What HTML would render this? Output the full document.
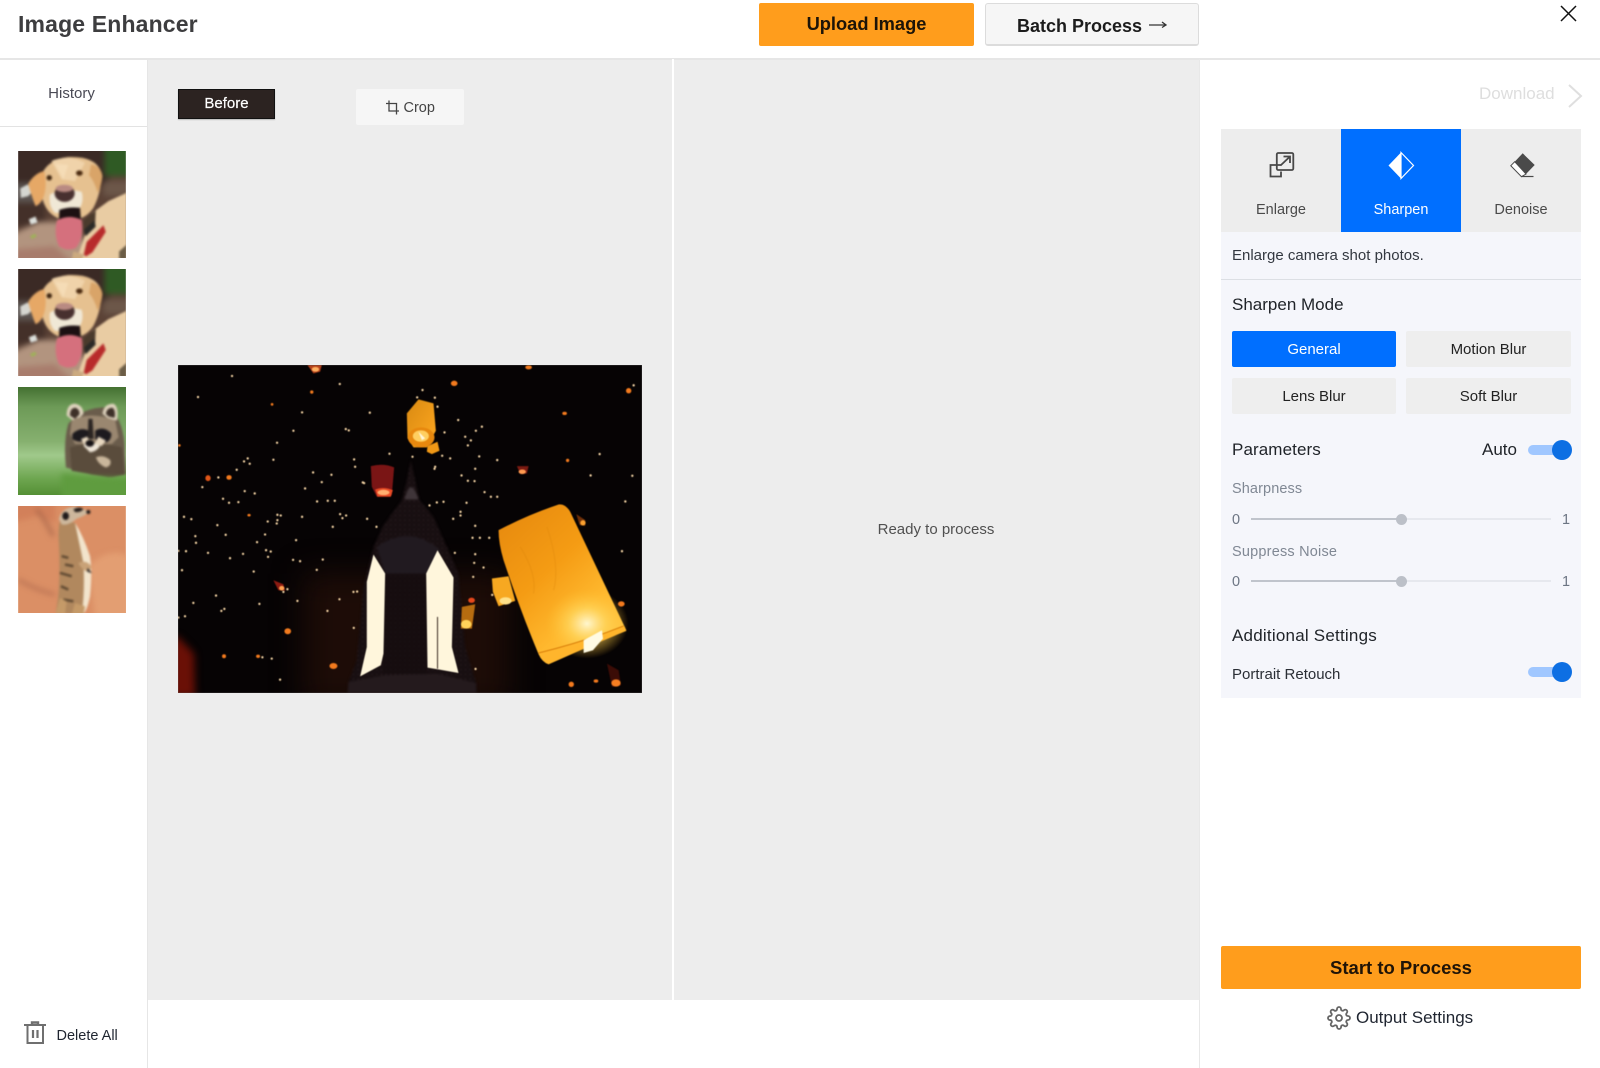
<!DOCTYPE html>
<html lang="en"><head><meta charset="utf-8"><title>Image Enhancer</title>
<style>
html,body{margin:0;padding:0;background:#fff}
body{width:1600px;height:1068px;position:relative;overflow:hidden;font-family:"Liberation Sans",Arial,sans-serif;color:#222}
.b{position:absolute}
.t{position:absolute;white-space:nowrap;line-height:20px;height:20px}
.c{text-align:center}
.btn{position:absolute;text-align:center;border-radius:2px;background:#eee;font-size:15px;color:#222;line-height:37px;height:36px}
svg{position:absolute;display:block}
.bg{filter:blur(9px)}
.s1{filter:blur(3.5px)}
</style></head><body>

<!-- structure -->
<div class="b" style="left:148px;top:59px;width:1051px;height:941px;background:#ededed"></div>
<div class="b" style="left:0;top:58px;width:1600px;height:1.5px;background:#e6e6e6"></div>
<div class="b" style="left:147px;top:59px;width:1px;height:1009px;background:#e6e6e6"></div>
<div class="b" style="left:1199px;top:59px;width:1px;height:1009px;background:#e8e8e8"></div>
<div class="b" style="left:671.5px;top:59px;width:2px;height:941px;background:#fff"></div>
<div class="b" style="left:0;top:125.5px;width:147px;height:1.5px;background:#e3e3e3"></div>

<!-- header -->
<div class="t" style="left:18px;top:14px;font-size:23px;font-weight:700;color:#3d3d3f;line-height:20px;letter-spacing:.15px">Image Enhancer</div>
<div class="b c" style="left:759px;top:3px;width:215px;height:43px;background:#ff9d1c;border-radius:2px;font-size:18.3px;font-weight:700;line-height:42px;color:#1d1408">Upload Image</div>
<div class="b" style="left:985px;top:3px;width:212px;height:40px;background:#f6f6f6;border:1.5px solid #dcdcdc;border-bottom-width:2px;border-radius:3px"></div>
<div class="t" style="left:1017px;top:16px;font-size:18px;font-weight:700;color:#1c1c1c">Batch Process</div>

<!-- left -->
<div class="t c" style="left:0;top:84px;width:143px;font-size:15px;color:#4a4a55">History</div>

<!-- dog thumbs -->
<svg width="0" height="0" style="left:0;top:0"><defs>
<clipPath id="tc"><rect width="322" height="320"/></clipPath>
<symbol id="dog" viewBox="0 0 322 320">
<g clip-path="url(#tc)">
<g class="bg">
<rect x="-20" y="-20" width="365" height="365" fill="#5b4236"/>
<rect x="-20" y="-20" width="290" height="120" fill="#3b2a25"/>
<rect x="258" y="-20" width="85" height="95" fill="#2f5a24"/>
<rect x="-20" y="95" width="90" height="60" fill="#5c5552"/>
<rect x="-20" y="155" width="100" height="70" fill="#443029"/>
<path d="M-20 250L60 212 165 212 240 340H-20z" fill="#b2947f"/>
<path d="M-20 295L110 285 170 340H-20z" fill="#a87c6c"/>
<rect x="255" y="90" width="80" height="45" fill="#6c5749"/>
</g>
<g class="s1">
<path d="M6 112L28 100 46 118 30 135 8 140z" fill="#d5d6d1"/>
<path d="M32 204L52 196 58 214 38 220z" fill="#dde0dc"/>
<path d="M35 255l15-8 6 8-14 8z" fill="#9fb05a"/>
<path d="M170 340L222 185 270 150 340 118V340z" fill="#e9cca3"/>
<path d="M302 300L325 280V325H302z" fill="#6a5c46"/>
<path d="M70 70Q90 25 150 18 225 15 245 55 255 110 225 170 195 215 130 205 80 190 70 130z" fill="#e6c190"/>
<path d="M100 30Q150 10 200 35L170 90 130 85z" fill="#f0d3aa"/>
<path d="M110 38L135 85 150 42z" fill="#f5dcb6"/>
<path d="M30 98Q50 65 78 60 88 105 75 140 65 160 52 165 38 130 30 98z" fill="#e6a866"/>
<path d="M218 40Q248 45 252 75 250 100 238 125 228 90 212 72z" fill="#d9a468"/>
<path d="M95 130Q135 108 190 122 200 160 172 185H110Q90 165 95 130z" fill="#f0e8d6"/>
<ellipse cx="139" cy="127" rx="30" ry="25" fill="#48302f"/>
<ellipse cx="138" cy="112" rx="26" ry="11" fill="#b98a82"/>
<ellipse cx="93" cy="80" rx="8" ry="8" fill="#3d2410"/>
<ellipse cx="183" cy="66" rx="10" ry="8" fill="#4a2a10"/>
<path d="M123 176Q150 166 185 170L188 210 122 210z" fill="#1c1012"/>
<path d="M196 208L232 178 230 220 198 238z" fill="#4a3a2c"/>
<path d="M197 235L228 208 232 226 202 255z" fill="#2b2a27"/>
<path d="M116 208Q150 188 190 206 198 260 172 290 145 302 122 285 106 250 116 208z" fill="#d5707d"/>
<path d="M196 310L205 272 255 222 262 242 222 303 203 315z" fill="#b82b2b"/>
<path d="M165 300L198 310 190 325 160 325z" fill="#cbaa80"/>
</g></g></symbol>
</defs></svg>

<svg style="left:18px;top:151px" width="108" height="107" viewBox="0 0 322 320"><use href="#dog"/></svg>
<svg style="left:18px;top:269px" width="108" height="107" viewBox="0 0 322 320"><use href="#dog"/></svg>

<!-- raccoon -->
<svg style="left:18px;top:387px" width="108" height="108" viewBox="0 0 322 322">
<defs><linearGradient id="gr" x1="0" y1="0" x2="0" y2="1"><stop offset="0" stop-color="#3d6a2b"/><stop offset=".2" stop-color="#6d9a57"/><stop offset=".5" stop-color="#86b06f"/><stop offset=".62" stop-color="#a0c98b"/><stop offset=".82" stop-color="#6ea650"/><stop offset="1" stop-color="#4e8a2e"/></linearGradient>
<clipPath id="rc"><rect width="322" height="322"/></clipPath></defs>
<g clip-path="url(#rc)">
<rect x="-10" y="-10" width="345" height="345" fill="url(#gr)"/>
<g class="s1">
<path d="M143 240Q135 160 150 110 190 60 270 60 310 90 318 170L322 260 280 270 220 262z" fill="#6a5c4b"/>
<path d="M155 180Q230 160 310 180L318 262 270 270 160 250z" fill="#5a4c3c"/>
<path d="M145 85Q145 50 170 50 195 55 195 80L170 105z" fill="#ded2bd"/>
<path d="M155 85Q155 62 172 62 185 68 183 82L170 95z" fill="#3d3028"/>
<path d="M252 80Q255 50 285 50 302 60 295 100L270 95z" fill="#ded2bd"/>
<path d="M262 80Q265 62 282 62 292 70 288 92L270 88z" fill="#3d3028"/>
<path d="M160 100Q215 70 290 100L300 150 280 170 170 170 155 140z" fill="#9a8770"/>
<path d="M162 140Q185 118 210 130 215 145 205 160 180 168 162 155z" fill="#1d1a1e"/>
<path d="M230 130Q255 115 278 138 280 155 265 165 240 165 230 155z" fill="#1d1a1e"/>
<path d="M210 95L222 95 226 155 208 155z" fill="#2a2422"/>
<path d="M188 155L206 148 218 170 200 178z" fill="#e8d8c0"/>
<path d="M228 170L240 148 262 160 250 176z" fill="#e8d8c0"/>
<path d="M195 175Q215 160 245 175 235 192 215 195z" fill="#efe6d8"/>
<ellipse cx="214" cy="168" rx="13" ry="10" fill="#161214"/>
<path d="M232 210Q255 200 275 218 280 235 262 240 240 232 232 210z" fill="#c9b69b"/>
</g>
<path class="bg" d="M130 258Q220 272 335 272V335H130z" fill="#5f9c3f"/>
</g></svg>

<!-- meerkat -->
<svg style="left:18px;top:506px" width="108" height="107" viewBox="0 0 322 320">
<defs><clipPath id="mc"><rect width="322" height="320"/></clipPath></defs>
<g clip-path="url(#mc)">
<rect x="-10" y="-10" width="345" height="345" fill="#db8f65"/>
<g class="bg">
<path d="M210 180Q270 120 335 150V335H230z" fill="#e39e72"/>
<path d="M-20 -20H110V50L60 30-20 50z" fill="#d2805a"/>
<path d="M55 10Q80 40 105 90" stroke="#9c5c44" stroke-width="7" fill="none"/>
<path d="M0 220Q50 250 110 265" stroke="#b06a4e" stroke-width="7" fill="none"/>
</g>
<g class="s1">
<path d="M112 320Q120 280 122 240 125 180 122 120 118 70 125 45L170 50 190 90 215 150 218 200 210 280 195 325z" fill="#b1885e"/>
<path d="M170 50Q195 90 215 150 222 200 215 270 205 320 190 325 200 250 195 170z" fill="#f2e4cc"/>
<path d="M130 150L150 155M125 200L160 210M128 240L150 250M135 280L165 285M140 175L165 180" stroke="#5a452f" stroke-width="7" fill="none"/>
<path d="M122 40Q128 6 170 2 195 6 212 18 200 30 175 38 150 60 130 55z" fill="#cdb79c"/>
<path d="M165 10Q185 0 195 10 185 20 170 18z" fill="#26201d"/>
<ellipse cx="142" cy="30" rx="10" ry="12" fill="#1f1a1a"/>
<ellipse cx="210" cy="18" rx="6" ry="6" fill="#1c1818"/>
<path d="M180 170Q205 160 218 180 218 195 205 195 190 190 180 170z" fill="#c9a277"/>
<path d="M208 185L220 200 215 200 205 195z" fill="#35302c"/>
<path d="M112 320L125 275 145 285 140 325zM160 325L170 290 200 300 195 325z" fill="#c59a68"/>
</g></g></svg>

<!-- delete all -->
<svg style="left:0;top:1000px" width="60" height="68" viewBox="0 1000 60 68" fill="none" stroke="#6f6f6f" stroke-width="2">
<path d="M24 1025H46"/><path d="M32 1024V1022.5H38V1024" stroke-width="2.4"/>
<path d="M27.5 1025V1043H43V1025"/><path d="M33 1030V1038M37.5 1030V1038" stroke-width="2.2"/>
</svg>
<div class="t" style="left:56.5px;top:1026px;font-size:14.5px;color:#1f2530">Delete All</div>

<!-- before / crop -->
<div class="b c" style="left:178px;top:89px;width:95px;height:28px;background:#2c2321;border:.5px solid #111;box-shadow:0 1px 1px #bbb;color:#fff;font-size:15px;line-height:28px;-webkit-text-stroke:.2px #fff">Before</div>
<div class="b" style="left:356px;top:89px;width:108px;height:36px;background:#f6f6f6;border-radius:2px"></div>
<svg style="left:384px;top:99px" width="16" height="17" viewBox="384 99 16 17" fill="none" stroke="#444" stroke-width="1.3"><path d="M389 100.5V111H399M386 103.5H396.5V114.5"/></svg>
<div class="t" style="left:403.5px;top:98px;font-size:14.5px;color:#444">Crop</div>

<!-- main image -->
<svg style="left:178px;top:365px" width="464" height="328" viewBox="24 15 1391 983" preserveAspectRatio="none">
<defs>
<linearGradient id="bl" x1="0" y1="0" x2=".75" y2="1"><stop offset="0" stop-color="#e5880e"/><stop offset=".45" stop-color="#f59c14"/><stop offset=".75" stop-color="#ffb82e"/><stop offset="1" stop-color="#ffc745"/></linearGradient>
<radialGradient id="gl"><stop offset="0" stop-color="#fff7d0"/><stop offset=".45" stop-color="#ffd860" stop-opacity=".7"/><stop offset="1" stop-color="#ffc030" stop-opacity="0"/></radialGradient>
<linearGradient id="tl" x1="0" y1="0" x2="1" y2="1"><stop offset="0" stop-color="#d98a12"/><stop offset="1" stop-color="#ffa820"/></linearGradient>
<pattern id="tx" width="14" height="14" patternUnits="userSpaceOnUse"><rect width="14" height="14" fill="#150c0e"/><circle cx="4" cy="4" r="2.4" fill="#372b30"/><circle cx="11" cy="11" r="2" fill="#2a1f23"/></pattern>
<clipPath id="ic"><rect x="24" y="15" width="1391" height="983"/></clipPath>
</defs>
<rect x="24" y="15" width="1391" height="983" fill="#060304"/>
<g clip-path="url(#ic)">
<rect x="400" y="640" width="620" height="400" fill="#1d0c07" style="filter:blur(45px)"/>
<path d="M24 830L72 880 75 1010H-20V830z" fill="#6a1006" style="filter:blur(12px)"/>
<!-- temple -->
<g style="filter:blur(3px)">
<path d="M722 300L735 360 748 420 790 470 830 560 865 640 885 860 918 968 920 998H532L535 965 560 900 580 680 610 560 640 495 695 420 710 360z" fill="url(#tx)"/>
<path d="M703 418Q722 345 745 418z" fill="#3f3539"/>
<path d="M645 640H768V940H640z" fill="#120a0c"/>
<path d="M645 640H768V940H640z" fill="url(#tx)" opacity=".55"/>
<path d="M620 560Q720 490 810 570L770 640H645z" fill="#211a20"/>
<path d="M535 965L640 945 800 940 918 968V998H532z" fill="#241a1d"/>
</g>
<g style="filter:blur(1.4px)">
<path d="M610 583L645 640 640 880 632 915 570 948 590 860 590 665z" fill="#fff6dc"/>
<path d="M802 570L850 652 845 860 865 938 808 928 772 922 768 640z" fill="#fff6dc"/>
<path d="M802 770V925" stroke="#3b2b22" stroke-width="3"/>
</g>
<!-- big lantern -->
<g style="filter:blur(1.5px)">
<path d="M985 510Q1070 465 1165 433 1185 430 1200 455L1368 810Q1250 860 1135 912 1115 905 1105 882 1050 750 1000 600 985 550 985 510z" fill="url(#bl)"/>
<ellipse cx="1250" cy="790" rx="125" ry="105" fill="url(#gl)"/>
<path d="M1105 880Q1240 845 1362 797L1368 812Q1250 860 1135 912 1115 905 1105 880z" fill="#ffb52c"/>
<path d="M1105 878Q1240 845 1360 797" stroke="#d77c08" stroke-width="3" fill="none"/>
<path d="M1240 840L1295 810 1298 835 1268 870 1240 878z" fill="#fffbe4"/>
<path d="M1050 560Q1100 640 1090 700M1130 500Q1170 620 1150 690" stroke="#d98509" stroke-width="4" fill="none" opacity=".3"/>
</g>
<!-- mid lanterns -->
<g style="filter:blur(1.6px)">
<path d="M710 160L745 118 790 130 797 212 770 262 730 262 712 235z" fill="url(#tl)"/>
<ellipse cx="753" cy="232" rx="40" ry="30" fill="#e7880e"/>
<ellipse cx="752" cy="228" rx="24" ry="17" fill="#ffcf60"/>
<path d="M745 215L765 235 755 240z" fill="#fff7dc"/>
<path d="M772 258L802 245 808 272 785 282 770 275z" fill="#f09816"/>
<path d="M602 318Q640 308 672 322L665 405 620 410 605 380z" fill="#7a1515"/>
<path d="M615 388Q640 378 668 390L662 410 622 410z" fill="#e84a25"/>
<ellipse cx="640" cy="397" rx="18" ry="8" fill="#ffb070"/>
<path d="M965 655L1015 648 1035 722 985 738 968 695z" fill="#f7a821"/>
<ellipse cx="1006" cy="722" rx="18" ry="11" fill="#ffe189"/>
<path d="M875 740L915 732 905 805 872 805z" fill="#b66c10"/>
<ellipse cx="888" cy="792" rx="16" ry="13" fill="#ffd35a"/>
<path d="M412 15H455L450 35 430 40z" fill="#b5401a"/><ellipse cx="436" cy="28" rx="11" ry="7" fill="#ffb060"/>
<path d="M310 660L340 672 345 692 325 690z" fill="#8e1b12"/><ellipse cx="335" cy="684" rx="8" ry="7" fill="#ffa050"/>
<path d="M1040 318H1075L1070 340 1050 342z" fill="#7a1a12"/><ellipse cx="1056" cy="335" rx="11" ry="7" fill="#ff9a50"/>
<path d="M1310 910L1345 930 1352 975 1325 980z" fill="#3b0c06"/><ellipse cx="1337" cy="968" rx="14" ry="11" fill="#f77f22"/>
<path d="M1218 462L1245 480 1245 497 1228 495z" fill="#6e2f08"/><circle cx="1238" cy="488" r="8" fill="#f9a030"/>
</g>
<!-- small orange lanterns -->
<g style="filter:blur(1.8px)" fill="#f27a1e">
<ellipse cx="852" cy="70" rx="10" ry="8"/><ellipse cx="1075" cy="22" rx="10" ry="6"/><ellipse cx="1375" cy="92" rx="8" ry="8"/>
<ellipse cx="114" cy="354" rx="8" ry="9" fill="#e05618"/><ellipse cx="177" cy="352" rx="8" ry="7"/><ellipse cx="353" cy="813" rx="10" ry="9"/>
<ellipse cx="490" cy="917" rx="12" ry="9"/><ellipse cx="162" cy="888" rx="6" ry="6"/><ellipse cx="264" cy="888" rx="6" ry="5"/>
<ellipse cx="904" cy="720" rx="10" ry="8" fill="#e5481c"/><ellipse cx="1353" cy="731" rx="10" ry="8"/><ellipse cx="1203" cy="972" rx="8" ry="8"/>
<ellipse cx="1277" cy="962" rx="7" ry="5"/><ellipse cx="1183" cy="160" rx="7" ry="5"/><ellipse cx="1192" cy="301" rx="5" ry="5"/><ellipse cx="28" cy="256" rx="4" ry="4"/><ellipse cx="425" cy="96" rx="5" ry="5"/><ellipse cx="306" cy="133" rx="4" ry="4"/><ellipse cx="237" cy="465" rx="5" ry="4"/>
</g>
<!-- stars -->
<path style="filter:blur(1.2px)" fill="none" stroke="#f8d8a8" stroke-width="7" stroke-linecap="round" d="M186 48h0M84 111h0M509 72h0M396 157h0M370 212h0M321 248h0M310 299h0M599 158h0M757 90h0M741 112h0M794 113h0M802 140h0M864 180h0M917 212h0M935 200h0M885 230h0M902 241h0M893 256h0M823 217h0M527 207h0M536 211h0M552 298h0M555 320h0M429 337h0M484 344h0M455 366h0M405 385h0M233 295h0M222 304h0M239 311h0M200 329h0M145 352h0M97 381h0M224 393h0M254 400h0M159 416h0M177 428h0M205 426h0M42 470h0M64 477h0M142 495h0M167 524h0M78 548h0M76 528h0M25 572h0M48 573h0M114 578h0M180 594h0M219 581h0M261 546h0M285 523h0M288 570h0M302 574h0M294 590h0M369 599h0M390 603h0M458 598h0M440 629h0M36 630h0M251 634h0M138 706h0M70 728h0M163 746h0M154 752h0M45 768h0M25 772h0M268 731h0M382 722h0M472 752h0M508 717h0M550 695h0M561 694h0M551 803h0M510 462h0M528 466h0M517 474h0M488 500h0M619 500h0M591 476h0M441 424h0M473 422h0M494 422h0M578 367h0M582 369h0M658 281h0M727 290h0M816 287h0M840 295h0M795 320h0M793 326h0M874 346h0M893 362h0M913 363h0M915 326h0M981 300h0M927 289h0M943 396h0M962 410h0M981 410h0M1288 282h0M1261 346h0M1386 347h0M1365 424h0M1355 573h0M889 428h0M871 455h0M871 466h0M849 476h0M915 497h0M907 533h0M929 533h0M957 533h0M915 582h0M912 608h0M940 622h0M854 578h0M909 650h0M966 704h0M820 425h0M800 427h0M778 436h0M322 464h0M322 480h0M320 490h0M332 466h0M293 484h0M396 470h0M378 540h0M305 895h0M330 958h0M277 891h0M916 926h0M1390 76h0M352 687h0M340 695h0"/>
</g>
<rect x="24" y="15" width="1391" height="983" fill="none" stroke="#888" stroke-width="2" opacity=".5"/>
</svg>

<div class="t c" style="left:673px;top:520px;width:526px;font-size:15px;color:#505050">Ready to process</div>

<!-- right panel -->
<div class="t" style="left:1479px;top:84px;font-size:17px;color:#dedede">Download</div>
<div class="b" style="left:1221px;top:129px;width:360px;height:103px;background:#ededed"></div>
<div class="b" style="left:1341px;top:129px;width:120px;height:103px;background:#006fff"></div>
<div class="b" style="left:1221px;top:232px;width:360px;height:466px;background:#f5f6fb"></div>
<div class="b" style="left:1221px;top:279px;width:360px;height:1px;background:#dcdfe4"></div>

<div class="t c" style="left:1221px;top:200px;width:120px;font-size:14.5px;color:#4a4a4a">Enlarge</div>
<div class="t c" style="left:1341px;top:200px;width:120px;font-size:14.5px;color:#fff">Sharpen</div>
<div class="t c" style="left:1461px;top:200px;width:120px;font-size:14.5px;color:#4a4a4a">Denoise</div>
<div class="t" style="left:1232px;top:246px;font-size:15px;color:#333840">Enlarge camera shot photos.</div>
<div class="t" style="left:1232px;top:295px;font-size:17px;color:#1f2328">Sharpen Mode</div>

<div class="btn" style="left:1232px;top:331px;width:164px;background:#006fff;color:#fff">General</div>
<div class="btn" style="left:1406px;top:331px;width:165px">Motion Blur</div>
<div class="btn" style="left:1232px;top:378px;width:164px">Lens Blur</div>
<div class="btn" style="left:1406px;top:378px;width:165px">Soft Blur</div>

<div class="t" style="left:1232px;top:440px;font-size:17px;letter-spacing:.1px;color:#1f2328">Parameters</div>
<div class="t" style="left:1482px;top:440px;font-size:17px;color:#1f2328">Auto</div>
<div class="b" style="left:1528px;top:445px;width:34px;height:10px;background:#a0c7ff;border-radius:5px"></div>
<div class="b" style="left:1552px;top:440px;width:20px;height:20px;background:#0d6fe3;border-radius:50%"></div>

<div class="t" style="left:1232px;top:479px;font-size:14.5px;letter-spacing:.1px;color:#808894">Sharpness</div>
<div class="t" style="left:1232px;top:510px;font-size:14.5px;color:#6c7583">0</div>
<div class="b" style="left:1251px;top:518px;width:300px;height:2px;background:#e6e8ee"></div>
<div class="b" style="left:1251px;top:518px;width:150px;height:2px;background:#c0c4cc"></div>
<div class="b" style="left:1395.5px;top:513.5px;width:11px;height:11px;background:#bcc0c8;border-radius:50%"></div>
<div class="t" style="left:1562px;top:510px;font-size:14.5px;color:#6c7583">1</div>

<div class="t" style="left:1232px;top:542px;font-size:14.5px;letter-spacing:.2px;color:#808894">Suppress Noise</div>
<div class="t" style="left:1232px;top:572px;font-size:14.5px;color:#6c7583">0</div>
<div class="b" style="left:1251px;top:580px;width:300px;height:2px;background:#e6e8ee"></div>
<div class="b" style="left:1251px;top:580px;width:150px;height:2px;background:#c0c4cc"></div>
<div class="b" style="left:1395.5px;top:575.5px;width:11px;height:11px;background:#bcc0c8;border-radius:50%"></div>
<div class="t" style="left:1562px;top:572px;font-size:14.5px;color:#6c7583">1</div>

<div class="t" style="left:1232px;top:626px;font-size:17px;letter-spacing:.22px;color:#1f2328">Additional Settings</div>
<div class="t" style="left:1232px;top:665px;font-size:15px;color:#2a2e35">Portrait Retouch</div>
<div class="b" style="left:1528px;top:667px;width:34px;height:10px;background:#a0c7ff;border-radius:5px"></div>
<div class="b" style="left:1552px;top:662px;width:20px;height:20px;background:#0d6fe3;border-radius:50%"></div>

<div class="b c" style="left:1221px;top:946px;width:360px;height:43px;background:#ff9d1c;border-radius:2px;font-size:18.5px;font-weight:700;line-height:43px;color:#201407">Start to Process</div>
<svg style="left:1327px;top:1006px" width="24" height="24" viewBox="0 0 24 24" fill="none" stroke="#666" stroke-width="1.8"><circle cx="12" cy="12" r="3"/><path d="M19.4 15a1.65 1.65 0 0 0 .33 1.82l.06.06a2 2 0 0 1 0 2.83 2 2 0 0 1-2.83 0l-.06-.06a1.65 1.65 0 0 0-1.82-.33 1.65 1.65 0 0 0-1 1.51V21a2 2 0 0 1-2 2 2 2 0 0 1-2-2v-.09A1.65 1.65 0 0 0 9 19.4a1.65 1.65 0 0 0-1.82.33l-.06.06a2 2 0 0 1-2.83 0 2 2 0 0 1 0-2.83l.06-.06a1.65 1.65 0 0 0 .33-1.82 1.65 1.65 0 0 0-1.51-1H3a2 2 0 0 1-2-2 2 2 0 0 1 2-2h.09A1.65 1.65 0 0 0 4.6 9a1.65 1.65 0 0 0-.33-1.82l-.06-.06a2 2 0 0 1 0-2.83 2 2 0 0 1 2.83 0l.06.06a1.65 1.65 0 0 0 1.82.33H9a1.65 1.65 0 0 0 1-1.51V3a2 2 0 0 1 2-2 2 2 0 0 1 2 2v.09a1.65 1.65 0 0 0 1 1.51 1.65 1.65 0 0 0 1.82-.33l.06-.06a2 2 0 0 1 2.83 0 2 2 0 0 1 0 2.83l-.06.06a1.65 1.65 0 0 0-.33 1.82V9a1.65 1.65 0 0 0 1.51 1H21a2 2 0 0 1 2 2 2 2 0 0 1-2 2h-.09a1.65 1.65 0 0 0-1.51 1z"/></svg>
<div class="t" style="left:1356px;top:1008px;font-size:17px;color:#1f2530">Output Settings</div>

<!-- icons in page coordinates -->
<svg style="left:0;top:0;pointer-events:none" width="1600" height="1068" viewBox="0 0 1600 1068" fill="none">
<path d="M1149 25H1166M1162 22L1166 25L1162 27.5" stroke="#333" stroke-width="1.3"/>
<path d="M1561 6L1576 21M1576 6L1561 21" stroke="#111" stroke-width="1.5"/>
<path d="M1569 85L1581 96L1569 107" stroke="#dfdfdf" stroke-width="2"/>
<rect x="1276.8" y="153" width="16.5" height="17" rx="1.5" stroke="#484848" stroke-width="1.8"/>
<path d="M1281 165H1270.5V176.5H1281V171.5" stroke="#484848" stroke-width="1.8"/>
<path d="M1280.5 165.5L1290 156.5M1283.5 156.5H1290V163" stroke="#484848" stroke-width="1.8"/>
<path d="M1401 152.5L1388.5 165.5L1401 178.5z" fill="#fff"/>
<path d="M1401 152.5L1413.5 165.5L1401 178.5z" stroke="#fff" stroke-width="1.2"/>
<path d="M1522.7 153.3L1534.7 165L1526 174L1514.7 161.7z" fill="#4a4a4a"/>
<path d="M1514.7 161.7L1526 174L1521.5 176.7L1510.8 165.7z" fill="#fff" stroke="#4a4a4a" stroke-width="1"/>
<path d="M1521.5 176.5H1533.5" stroke="#4a4a4a" stroke-width="1.2"/>
</svg>
</body></html>
